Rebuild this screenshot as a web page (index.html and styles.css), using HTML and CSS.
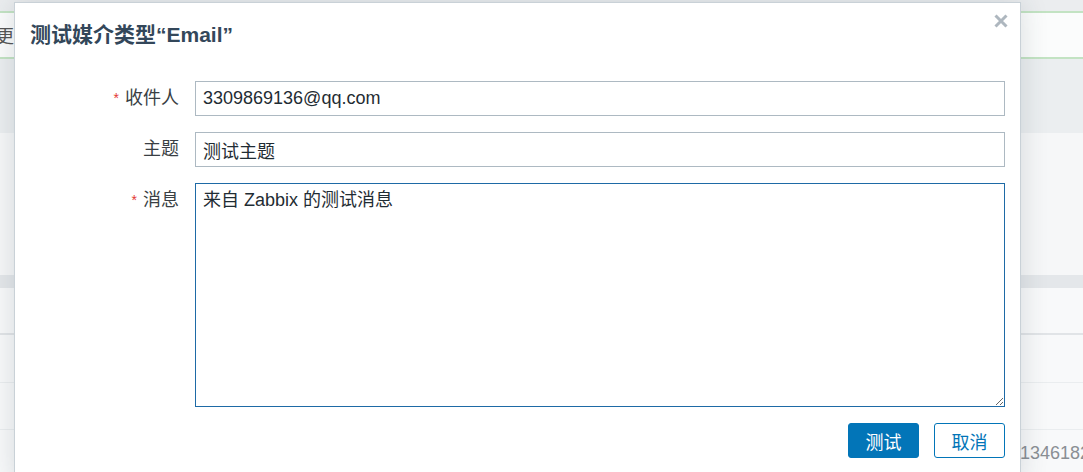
FILE: index.html
```html
<!DOCTYPE html>
<html lang="zh-CN">
<head>
<meta charset="utf-8">
<title>测试媒介类型</title>
<link rel="stylesheet" href="styles.css">
</head>
<body>
<div class="page">
  <div class="topbar"></div>
  <div class="msg"><span class="msg-text">更</span></div>
  <div class="band"></div>
  <div class="panel"></div>
  <div class="thead"></div>
  <div class="trow r1"></div>
  <div class="trow r2"></div>
  <div class="trow r3"></div>
  <div class="trow r4"><span class="cell-num">1346182</span></div>
</div>

<div class="dialog">
  <div class="dlg-head">
    <h4 class="dlg-title">测试媒介类型“Email”</h4>
  </div>
  <button class="dlg-close" type="button" aria-label="关闭">
    <svg width="14" height="14" viewBox="0 0 14 14"><path d="M1.5 1.5 L12.5 12.5 M12.5 1.5 L1.5 12.5" stroke="#aeb7bf" stroke-width="3" fill="none"/></svg>
  </button>
  <form class="dlg-form">
    <label class="f-label"><span class="req">*</span>收件人</label>
    <input class="f-input" type="text" value="3309869136@qq.com">
    <label class="f-label">主题</label>
    <input class="f-input" type="text" value="测试主题">
    <label class="f-label"><span class="req">*</span>消息</label>
    <textarea class="f-text">来自 Zabbix 的测试消息</textarea>
  </form>
  <div class="dlg-foot">
    <button class="btn btn-primary" type="button">测试</button>
    <button class="btn btn-alt" type="button">取消</button>
  </div>
</div>
</body>
</html>
```
FILE: styles.css
```css
html, body {
  margin: 0;
  padding: 0;
  height: 100%;
  overflow: hidden;
}
body {
  font-family: "Liberation Sans", "Noto Sans CJK SC", sans-serif;
  background: #f7f8f9;
  position: relative;
}
.page {
  display: flex;
  flex-direction: column;
}
.topbar {
  height: 11px;
  background: #ebedef;
}
.msg {
  height: 44px;
  border-top: 2px solid #c3e3c3;
  border-bottom: 2px solid #c3e3c3;
  background: #fbfcfc;
  display: flex;
  align-items: center;
  overflow: hidden;
}
.msg-text {
  margin-left: -4px;
  font-size: 18px;
  color: #555;
  white-space: nowrap;
}
.band {
  height: 74px;
  background: #ebeef0;
}
.panel {
  height: 142px;
  background: #f6f7f8;
}
.thead {
  height: 13px;
  background: #e4e7ea;
}
.trow {
  background: #f8f9fa;
  display: flex;
  align-items: center;
  overflow: hidden;
}
.r1 { height: 45px; border-bottom: 2px solid #e1e4e7; }
.r2 { height: 47px; border-bottom: 1px solid #eaedef; }
.r3 { height: 46px; border-bottom: 1px solid #eaedef; }
.r4 { height: 60px; align-items: flex-start; }
.cell-num {
  margin-left: 1020px;
  margin-top: 13px;
  font-size: 18px;
  color: #8a8f94;
  white-space: nowrap;
}

/* dialog overlay */
.dialog {
  position: absolute;
  left: 14px;
  top: 2px;
  width: 975px;
  padding: 0 15px 24px;
  background: #fff;
  border: 1px solid #c9d1d7;
  box-shadow: 0 0 26px rgba(40, 55, 70, 0.16);
}
.dlg-head {
  padding-top: 19px;
}
.dlg-title {
  margin: 0;
  font-size: 21px;
  line-height: 25px;
  font-weight: bold;
  color: #33475a;
}
.dlg-close {
  position: absolute;
  top: 11px;
  right: 12px;
  width: 14px;
  height: 14px;
  padding: 0;
  border: 0;
  background: none;
  display: flex;
}
.dlg-form {
  margin: 34px 0 0;
  display: grid;
  grid-template-columns: 149px 810px;
  grid-template-rows: 35px 35px 224px;
  column-gap: 16px;
  row-gap: 16px;
}
.f-label {
  display: flex;
  justify-content: flex-end;
  align-items: flex-start;
  height: 35px;
  line-height: 35px;
  font-size: 18px;
  color: #3a3f44;
}
.req {
  color: #e33734;
  font-size: 14px;
  line-height: 14px;
  margin-top: 10px;
  margin-right: 6px;
}
.f-input {
  box-sizing: border-box;
  height: 35px;
  width: 100%;
  margin: 0;
  padding: 0 7px;
  border: 1px solid #adb9c2;
  border-radius: 0;
  font-family: inherit;
  font-size: 18px;
  color: #1f2c33;
  background: #fff;
  outline: none;
}
.f-text {
  box-sizing: border-box;
  height: 224px;
  width: 100%;
  margin: 0;
  padding: 6px 7px;
  border: 1px solid #1e6aa6;
  border-radius: 0;
  font-family: inherit;
  font-size: 18px;
  line-height: 1.2;
  color: #1f2c33;
  background: #fff;
  outline: none;
  resize: both;
}
.dlg-foot {
  margin-top: 16px;
  display: flex;
  justify-content: flex-end;
  gap: 15px;
}
.btn {
  box-sizing: border-box;
  height: 35px;
  width: 71px;
  padding: 0;
  border-radius: 3px;
  font-family: inherit;
  font-size: 18px;
  cursor: pointer;
}
.btn-primary {
  background: #0275b8;
  border: 1px solid #0275b8;
  color: #fff;
}
.btn-alt {
  background: #fff;
  border: 1px solid #0275b8;
  color: #0275b8;
}
```
